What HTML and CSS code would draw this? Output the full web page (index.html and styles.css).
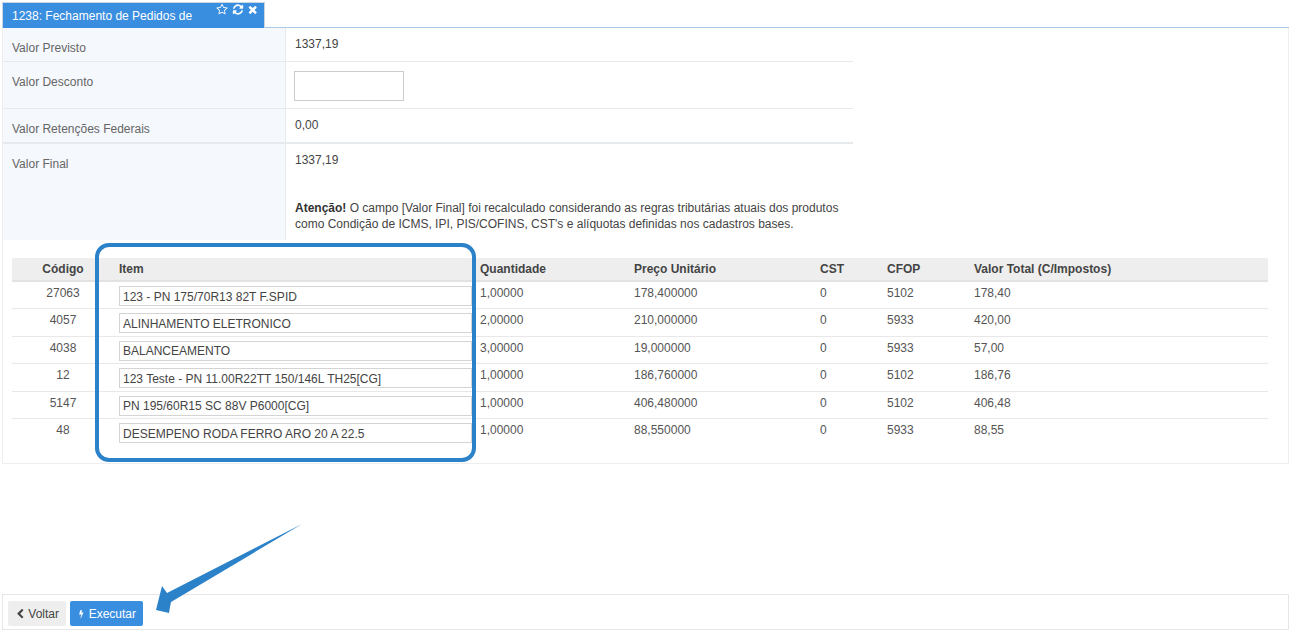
FILE: index.html
```html
<!DOCTYPE html>
<html lang="pt-BR">
<head>
  <meta charset="UTF-8">
  <title>Fechamento de Pedidos de Venda</title>
  <link rel="stylesheet" href="styles.css">
</head>
<body>
<div class="page">
  <div class="tabs">
    <div class="tab">
      <span class="tab-title">1238: Fechamento de Pedidos de Venda</span>
      <svg class="tab-icon" viewBox="0 0 1792 1792"><path d="M1201 1004l306-297-422-62-189-382-189 382-422 62 306 297-73 421 378-199 377 199zm527-357q0 22-26 48l-363 354 86 500q1 7 1 20 0 50-41 50-19 0-40-12l-449-236-449 236q-22 12-40 12-21 0-31.5-14.5t-10.5-35.5q0-6 2-20l86-500-364-354q-25-27-25-48 0-37 56-46l502-73 225-455q19-41 49-41t49 41l225 455 502 73q56 9 56 46z"/></svg>
      <svg class="tab-icon" viewBox="0 0 1792 1792"><path d="M1639 1056q0 5-1 7-64 268-268 434.5t-478 166.5q-146 0-282.5-55t-243.5-157l-129 129q-19 19-45 19t-45-19-19-45v-448q0-26 19-45t45-19h448q26 0 45 19t19 45-19 45l-137 137q71 66 161 102t187 36q134 0 250-65t186-179q11-17 53-117 8-23 30-23h192q13 0 22.5 9.5t9.5 22.5zm25-800v448q0 26-19 45t-45 19h-448q-26 0-45-19t-19-45 19-45l138-138q-148-137-349-137-134 0-250 65t-186 179q-11 17-53 117-8 23-30 23h-199q-13 0-22.5-9.5t-9.5-22.5v-7q65-268 270-434.5t480-166.5q146 0 284 55.5t245 156.5l130-129q19-19 45-19t45 19 19 45z"/></svg>
      <svg class="tab-icon" viewBox="0 0 1792 1792"><path d="M1298 1322q0 40-28 68l-136 136q-28 28-68 28t-68-28l-294-294-294 294q-28 28-68 28t-68-28l-136-136q-28-28-28-68t28-68l294-294-294-294q-28-28-28-68t28-68l136-136q28-28 68-28t68 28l294 294 294-294q28-28 68-28t68 28l136 136q28 28 28 68t-28 68l-294 294 294 294q28 28 28 68z"/></svg>
    </div>
  </div>

  <div class="panel">
    <div class="form">
      <div class="form-row row-previsto">
        <div class="form-label">Valor Previsto</div>
        <div class="form-value">1337,19</div>
      </div>
      <div class="form-row row-desconto">
        <div class="form-label">Valor Desconto</div>
        <div class="form-value form-value-input"><input class="input-desconto" type="text"></div>
      </div>
      <div class="form-row row-retencoes">
        <div class="form-label">Valor Retenções Federais</div>
        <div class="form-value">0,00</div>
      </div>
      <div class="form-row row-final">
        <div class="form-label">Valor Final</div>
        <div class="form-value">
          1337,19
          <p class="notice"><strong>Atenção!</strong> O campo [Valor Final] foi recalculado considerando as regras tributárias atuais dos produtos como Condição de ICMS, IPI, PIS/COFINS, CST's e alíquotas definidas nos cadastros bases.</p>
        </div>
      </div>
    </div>

    <table class="items">
      <thead>
        <tr>
          <th class="col-codigo">Código</th>
          <th class="col-item">Item</th>
          <th class="col-qtd">Quantidade</th>
          <th class="col-preco">Preço Unitário</th>
          <th class="col-cst">CST</th>
          <th class="col-cfop">CFOP</th>
          <th>Valor Total (C/Impostos)</th>
        </tr>
      </thead>
      <tbody>
        <tr>
          <td class="col-codigo">27063</td>
          <td class="col-item"><input class="input-item" type="text" value="123 - PN 175/70R13 82T F.SPID"></td>
          <td>1,00000</td><td>178,400000</td><td>0</td><td>5102</td><td>178,40</td>
        </tr>
        <tr>
          <td class="col-codigo">4057</td>
          <td class="col-item"><input class="input-item" type="text" value="ALINHAMENTO ELETRONICO"></td>
          <td>2,00000</td><td>210,000000</td><td>0</td><td>5933</td><td>420,00</td>
        </tr>
        <tr>
          <td class="col-codigo">4038</td>
          <td class="col-item"><input class="input-item" type="text" value="BALANCEAMENTO"></td>
          <td>3,00000</td><td>19,000000</td><td>0</td><td>5933</td><td>57,00</td>
        </tr>
        <tr>
          <td class="col-codigo">12</td>
          <td class="col-item"><input class="input-item" type="text" value="123 Teste - PN 11.00R22TT 150/146L TH25[CG]"></td>
          <td>1,00000</td><td>186,760000</td><td>0</td><td>5102</td><td>186,76</td>
        </tr>
        <tr>
          <td class="col-codigo">5147</td>
          <td class="col-item"><input class="input-item" type="text" value="PN 195/60R15 SC 88V P6000[CG]"></td>
          <td>1,00000</td><td>406,480000</td><td>0</td><td>5102</td><td>406,48</td>
        </tr>
        <tr>
          <td class="col-codigo">48</td>
          <td class="col-item"><input class="input-item" type="text" value="DESEMPENO RODA FERRO ARO 20 A 22.5"></td>
          <td>1,00000</td><td>88,550000</td><td>0</td><td>5933</td><td>88,55</td>
        </tr>
      </tbody>
    </table>
  </div>

  <div class="footer">
    <button class="btn btn-back" type="button">
      <svg class="btn-icon" viewBox="0 0 1792 1792"><path d="M1427 301l-531 531 531 531q19 19 19 45t-19 45l-166 166q-19 19-45 19t-45-19l-742-742q-19-19-19-45t19-45l742-742q19-19 45-19t45 19l166 166q19 19 19 45t-19 45z"/></svg>
      Voltar
    </button>
    <button class="btn btn-run" type="button">
      <svg class="btn-icon" viewBox="0 0 1792 1792"><path d="M1333 566q18 20 7 44l-540 1157q-13 25-42 25-4 0-14-2-17-5-25.5-19t-4.5-30l197-808-406 101q-4 1-12 1-18 0-31-11-18-15-13-39l201-825q4-14 16-23t28-9h328q19 0 32 12.5t13 29.5q0 8-5 18l-171 463 396-98q8-2 12-2 19 0 34 15z"/></svg>
      Executar
    </button>
  </div>

  <!-- marcacoes do print -->
  <div class="mark-box"></div>
  <svg class="mark-arrow" width="170" height="100" viewBox="0 0 170 100">
    <polygon points="162,4 27,73 22,66 16,90 29,93 30,87 31,82"/>
  </svg>
</div>
</body>
</html>
```

FILE: styles.css
```css
* {
  box-sizing: border-box;
}
html, body {
  margin: 0;
  background: #fff;
}
body {
  font-family: "Liberation Sans", Arial, sans-serif;
  font-size: 12px;
  line-height: 17px;
  color: #555;
}
.page {
  position: relative;
  width: 1293px;
  height: 634px;
  padding: 2px 4px 0 2px;
  overflow: hidden;
}

/* aba */
.tabs {
  height: 26px;
  border-bottom: 1px solid #a9c9e8;
}
.tab {
  display: flex;
  align-items: flex-start;
  width: 263px;
  height: 26px;
  padding: 5px 0 0 9px;
  background: #3a8ee0;
  color: #fff;
  border: 1px solid #c9d6e2;
  border-bottom: 0;
}
.tab-title {
  margin-right: 3px;
}
.tab-icon {
  width: 13px;
  height: 13px;
  margin: -5px 4px 0 0;
  fill: #fff;
}

/* painel */
.panel {
  height: 436px;
  border: 1px solid #eee;
  border-top: 0;
}
.form {
  width: 850px;
}
.form-row {
  display: grid;
  grid-template-columns: 283px 1fr;
  border-bottom: 1px solid #e6eaed;
}
.row-previsto { height: 34px; }
.row-desconto { height: 47px; }
.row-retencoes { height: 35px; border-bottom-width: 2px; }
.row-final { height: 96px; border-bottom: 0; }
.form-label {
  padding: 12px 0 0 9px;
  background: #f5f8fc;
  border-right: 1px solid #e6eaed;
  color: #666;
}
.form-value {
  padding: 8px 0 0 9px;
  color: #444;
}
.form-value-input {
  padding: 9px 0 0 8px;
}
.input-desconto {
  display: block;
  width: 110px;
  height: 30px;
  border: 1px solid #ccc;
  background: #fff;
}
.notice {
  margin: 31px 0 0;
  line-height: 16px;
  width: 545px;
}
.notice strong {
  color: #333;
}

/* itens */
.items {
  width: 1256px;
  margin: 18px 0 0 9px;
  border-collapse: collapse;
  table-layout: fixed;
}
.items th {
  height: 23px;
  padding: 0 5px;
  background: #eee;
  border-bottom: 2px solid #e2e2e2;
  text-align: left;
  font-weight: bold;
  color: #444;
}
.items td {
  height: 27.5px;
  padding: 3px 5px 0;
  vertical-align: top;
  border-bottom: 1px solid #e8e8e8;
  color: #555;
}
.items tr:last-child td {
  border-bottom: 0;
}
.items th.col-codigo,
.items td.col-codigo {
  text-align: center;
}
.col-codigo { width: 102px; }
.col-item { width: 361px; }
.col-qtd { width: 154px; }
.col-preco { width: 186px; }
.col-cst { width: 67px; }
.col-cfop { width: 87px; }
.items td.col-item {
  padding: 4px 3px 0 5px;
}
.input-item {
  display: block;
  width: 100%;
  height: 20px;
  padding: 1px 3px 0;
  border: 1px solid #d4d4d4;
  background: #fff;
  font-family: "Liberation Sans", Arial, sans-serif;
  font-size: 12px;
  color: #444;
}

/* rodape */
.footer {
  display: flex;
  gap: 4px;
  height: 36px;
  margin-top: 130px;
  padding: 6px 5px 0;
  border: 1px solid #e6e6e6;
}
.btn {
  display: flex;
  align-items: center;
  gap: 3px;
  height: 25px;
  padding: 0 7px;
  border: 0;
  border-radius: 2px;
  font-family: "Liberation Sans", Arial, sans-serif;
  font-size: 12px;
}
.btn-back {
  width: 58px;
  background: #eee;
  color: #444;
}
.btn-run {
  width: 73px;
  background: #3a8ee0;
  color: #fff;
}
.btn-icon {
  width: 12px;
  height: 12px;
  fill: currentColor;
}

/* marcacoes sobre o print */
.mark-box {
  position: absolute;
  left: 95px;
  top: 243px;
  width: 381px;
  height: 219px;
  border: 4px solid #2b82c9;
  border-radius: 14px;
}
.mark-arrow {
  position: absolute;
  left: 140px;
  top: 520px;
  fill: #2b82c9;
}
```
